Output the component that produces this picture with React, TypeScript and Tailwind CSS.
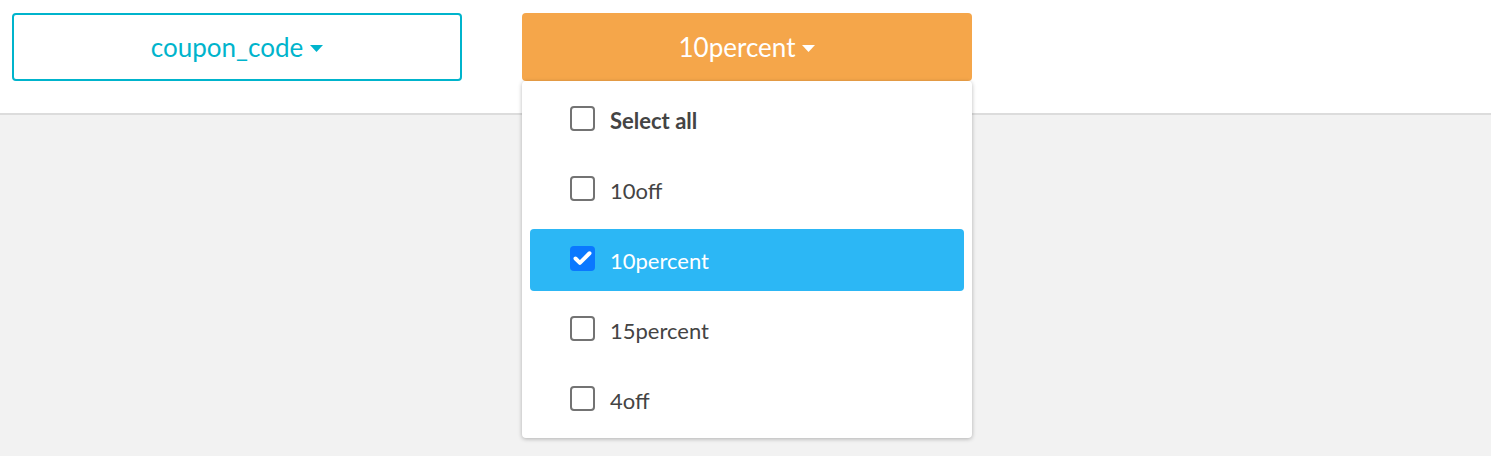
import { Check } from "lucide-react";

const options = [
  { label: "Select all", bold: true, checked: false },
  { label: "10off", bold: false, checked: false },
  { label: "10percent", bold: false, checked: true },
  { label: "15percent", bold: false, checked: false },
  { label: "4off", bold: false, checked: false },
];

function Caret({ className }: { className?: string }) {
  return (
    <svg viewBox="0 0 13 7" className={className} width="13" height="7">
      <path d="M0 0h13L6.5 7z" fill="currentColor" />
    </svg>
  );
}

export default function App() {
  return (
    <div
      className="min-h-[456px] bg-[#f2f2f2]"
      style={{ fontFamily: '"Source Sans Pro", Lato, "Noto Sans", sans-serif' }}
    >
      <div className="flex h-[115px] gap-[60px] border-b-2 border-[#dcdcdc] bg-white px-3 pt-[13px]">
        <button
          type="button"
          className="flex h-[68px] w-[450px] items-center justify-center gap-[7px] rounded-[4px] border-2 border-[#00b4cc] text-[26px] text-[#00b4cc]"
        >
          coupon_code
          <Caret className="mt-[2px]" />
        </button>

        <div className="relative">
          <button
            type="button"
            className="flex h-[68px] w-[450px] items-center justify-center gap-[7px] rounded-[4px] bg-[#f5a64a] text-[26px] text-white"
          >
            10percent
            <Caret className="mt-[2px]" />
          </button>

          <div className="absolute left-0 top-[68px] z-10 flex w-[450px] flex-col gap-2 rounded-[4px] bg-white px-2 pb-[7px] pt-[8px] shadow-[0_1px_4px_rgba(0,0,0,0.28)]">
            {options.map((o) => (
              <div
                key={o.label}
                className={`flex h-[62px] items-center gap-[15px] rounded-[4px] pl-[40px] text-[22px] ${
                  o.checked ? "bg-[#2cb7f5] text-white" : "text-[#444]"
                } ${o.bold ? "font-bold" : ""}`}
              >
                {o.checked ? (
                  <span className="mb-[4px] flex h-[25px] w-[25px] items-center justify-center rounded-[4px] bg-[#0a78ff]">
                    <Check className="h-[21px] w-[21px] text-white" strokeWidth={4.5} />
                  </span>
                ) : (
                  <span className="mb-[4px] h-[25px] w-[25px] rounded-[4px] border-2 border-[#737373] bg-white" />
                )}
                <span>{o.label}</span>
              </div>
            ))}
          </div>
        </div>
      </div>
    </div>
  );
}
